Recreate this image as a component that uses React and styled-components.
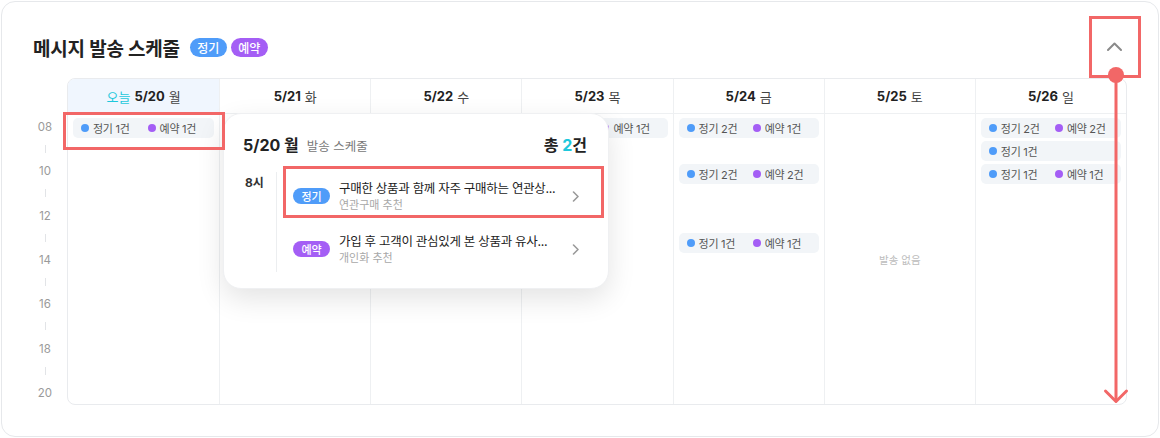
import styled, { createGlobalStyle } from 'styled-components';

const GlobalStyle = createGlobalStyle`
  html, body {
    margin: 0;
    padding: 0;
    background: #fff;
  }
  body {
    font-family: Inter, "Noto Sans CJK KR", sans-serif;
    color: #222;
  }
  * { box-sizing: border-box; }
`;

const BLUE = '#4f9cf9';
const PURPLE = '#a45ef5';
const CYAN = '#1ec8dc';
const RED = '#f26767';

const Page = styled.div`
  position: relative;
  width: 1160px;
  height: 438px;
  padding: 1px;
`;

const Card = styled.section`
  height: 436px;
  border: 1px solid #e6e8eb;
  border-radius: 14px;
  padding: 29px 31px 0 31px;
  display: flex;
  flex-direction: column;
  background: #fff;
`;

const TopBar = styled.header`
  height: 32px;
  margin-bottom: 15px;
  display: flex;
  align-items: center;
  justify-content: space-between;
`;

const TitleGroup = styled.div`
  display: flex;
  align-items: center;
  h2 {
    margin: 0 10px 0 0;
    font-size: 19px;
    font-weight: 700;
    letter-spacing: -0.2px;
    color: #222;
  }
`;

const Pill = styled.span`
  display: inline-flex;
  align-items: center;
  justify-content: center;
  width: 37px;
  height: ${p => (p.$small ? '16px' : '19px')};
  margin-right: ${p => (p.$small ? '0' : '4px')};
  flex-shrink: 0;
  border-radius: 10px;
  background: ${p => (p.$kind === 'reserve' ? PURPLE : BLUE)};
  color: #fff;
  font-size: ${p => (p.$small ? '11px' : '12px')};
  font-weight: 500;
`;

const CollapseButton = styled.button`
  width: 24px;
  height: 24px;
  border: 0;
  padding: 0;
  background: none;
  display: flex;
  align-items: center;
  justify-content: center;
  margin-right: 1px;
`;

const CalendarWrap = styled.div`
  position: relative;
  display: flex;
  height: 327px;
`;

const TimeAxis = styled.div`
  width: 24px;
  margin-right: 10px;
  padding: 42px 0 5px;
  display: flex;
  flex-direction: column;
  align-items: center;
  justify-content: space-between;
`;

const TimeLabel = styled.span`
  font-size: 11.5px;
  line-height: 14px;
  color: #9a9a9a;
`;

const Tick = styled.span`
  width: 1px;
  height: 8px;
  background: #e2e4e7;
`;

const Grid = styled.div`
  flex: 1;
  display: grid;
  grid-template-columns: repeat(7, 1fr);
  border: 1px solid #e9ebee;
  border-radius: 8px;
`;

const DayColumn = styled.div`
  display: flex;
  flex-direction: column;
  min-width: 0;
  & + & { border-left: 1px solid #eef0f2; }
`;

const DayHeader = styled.div`
  height: 35px;
  border-bottom: 1px solid #eef0f2;
  display: flex;
  align-items: center;
  justify-content: center;
  gap: 4px;
  font-size: 13px;
  background: ${p => (p.$today ? '#f0f6fe' : 'transparent')};
  border-top-left-radius: ${p => (p.$today ? '7px' : '0')};
  b { font-weight: 700; color: #222; }
  span { color: #444; }
  em { font-style: normal; color: ${CYAN}; }
`;

const DayBody = styled.div`
  flex: 1;
  padding: 4px 5px;
  display: grid;
  grid-template-rows: repeat(12, 23px);
`;

const EmptyBody = styled.div`
  flex: 1;
  display: flex;
  align-items: center;
  justify-content: center;
  font-size: 10.5px;
  color: #bdbdbd;
`;

const Chip = styled.div`
  grid-row: ${p => p.$row};
  height: 20px;
  border-radius: 5px;
  background: #f2f5f8;
  padding: 0 8px;
  display: grid;
  grid-template-columns: 1fr 1fr;
  column-gap: 8px;
  align-items: center;
`;

const ChipItem = styled.span`
  display: flex;
  align-items: center;
  gap: 4px;
  font-size: 11px;
  color: #555;
  white-space: nowrap;
  letter-spacing: -0.3px;
  &::before {
    content: '';
    width: 8px;
    height: 8px;
    border-radius: 50%;
    background: ${p => (p.$kind === 'reserve' ? PURPLE : BLUE)};
  }
`;

const Popover = styled.div`
  position: absolute;
  left: 190px;
  top: 35px;
  width: 386px;
  height: 176px;
  background: #fff;
  border: 1px solid #eff0f2;
  border-radius: 18px;
  box-shadow: 0 10px 28px rgba(0, 0, 0, 0.11);
  padding: 19px 6px 0 19px;
  z-index: 2;
`;

const PopHead = styled.div`
  height: 22px;
  display: flex;
  align-items: center;
  justify-content: space-between;
  padding-right: 15px;
  h3 {
    margin: 0;
    font-size: 16px;
    font-weight: 700;
    color: #222;
    display: flex;
    align-items: baseline;
    gap: 8px;
  }
  small {
    font-size: 12.5px;
    font-weight: 400;
    color: #777;
  }
  strong {
    font-size: 16px;
    font-weight: 700;
    color: #222;
  }
  strong em { font-style: normal; color: ${CYAN}; }
`;

const HourGroup = styled.div`
  margin-top: 16px;
  display: flex;
`;

const HourLabel = styled.span`
  width: 33px;
  padding: 4px 0 0 2px;
  font-size: 12px;
  line-height: 16px;
  font-weight: 700;
  color: #333;
`;

const Rail = styled.span`
  width: 1px;
  margin: 1px 0 2px;
  background: #eceef0;
`;

const ItemList = styled.div`
  flex: 1;
  padding-left: 9px;
  display: flex;
  flex-direction: column;
  gap: 3px;
`;

const Item = styled.div`
  height: 50px;
  display: flex;
  align-items: center;
  gap: 9px;
  padding: 0 22px 0 7px;
`;

const ItemText = styled.div`
  flex: 1;
  min-width: 0;
  display: flex;
  flex-direction: column;
  gap: 1px;
  p {
    margin: 0;
    font-size: 12.5px;
    line-height: 17px;
    color: #222;
    white-space: nowrap;
    overflow: hidden;
    text-overflow: ellipsis;
    letter-spacing: -0.3px;
  }
  span {
    font-size: 11px;
    line-height: 15px;
    color: #a8a8a8;
  }
`;

const Frame = styled.div`
  position: absolute;
  left: ${p => p.$x}px;
  top: ${p => p.$y}px;
  width: ${p => p.$w}px;
  height: ${p => p.$h}px;
  border: 3px solid ${RED};
  z-index: 5;
  pointer-events: none;
`;

const Pointer = styled.svg`
  position: absolute;
  left: 1100px;
  top: 66px;
  z-index: 5;
  pointer-events: none;
`;

const days = [
  { date: '5/20', day: '월', today: true, events: [{ row: 1, r: 1, v: 1 }] },
  { date: '5/21', day: '화', events: [] },
  { date: '5/22', day: '수', events: [] },
  { date: '5/23', day: '목', events: [{ row: 1, r: 1, v: 1 }] },
  {
    date: '5/24', day: '금',
    events: [{ row: 1, r: 2, v: 1 }, { row: 3, r: 2, v: 2 }, { row: 6, r: 1, v: 1 }],
  },
  { date: '5/25', day: '토', events: null },
  {
    date: '5/26', day: '일',
    events: [{ row: 1, r: 2, v: 2 }, { row: 2, r: 1 }, { row: 3, r: 1, v: 1 }],
  },
];

const hours = ['08', '10', '12', '14', '16', '18', '20'];

const schedule = [
  { kind: 'regular', label: '정기', title: '구매한 상품과 함께 자주 구매하는 연관상...', sub: '연관구매 추천' },
  { kind: 'reserve', label: '예약', title: '가입 후 고객이 관심있게 본 상품과 유사...', sub: '개인화 추천' },
];

function Chevron({ dir }) {
  return dir === 'up' ? (
    <svg width="15" height="10" viewBox="0 0 15 10">
      <polyline points="1,8 7.5,1.5 14,8" fill="none" stroke="#8a8a8a" strokeWidth="2" strokeLinecap="round" strokeLinejoin="round" />
    </svg>
  ) : (
    <svg width="8" height="11" viewBox="0 0 8 11">
      <polyline points="1.5,1 6,5.5 1.5,10" fill="none" stroke="#9a9a9a" strokeWidth="1.6" strokeLinecap="round" strokeLinejoin="round" />
    </svg>
  );
}

export default function App() {
  return (
    <Page>
      <GlobalStyle />
      <Card>
        <TopBar>
          <TitleGroup>
            <h2>메시지 발송 스케줄</h2>
            <Pill $kind="regular">정기</Pill>
            <Pill $kind="reserve">예약</Pill>
          </TitleGroup>
          <CollapseButton>
            <Chevron dir="up" />
          </CollapseButton>
        </TopBar>

        <CalendarWrap>
          <TimeAxis>
            {hours.map((h, i) => [
              i > 0 && <Tick key={'t' + h} />,
              <TimeLabel key={h}>{h}</TimeLabel>,
            ])}
          </TimeAxis>

          <Grid>
            {days.map(d => (
              <DayColumn key={d.date}>
                <DayHeader $today={d.today}>
                  {d.today && <em>오늘</em>}
                  <b>{d.date}</b>
                  <span>{d.day}</span>
                </DayHeader>
                {d.events ? (
                  <DayBody>
                    {d.events.map(e => (
                      <Chip key={e.row} $row={e.row}>
                        {e.r && <ChipItem $kind="regular">정기 {e.r}건</ChipItem>}
                        {e.v && <ChipItem $kind="reserve">예약 {e.v}건</ChipItem>}
                      </Chip>
                    ))}
                  </DayBody>
                ) : (
                  <EmptyBody>발송 없음</EmptyBody>
                )}
              </DayColumn>
            ))}
          </Grid>

          <Popover>
            <PopHead>
              <h3>5/20 월<small>발송 스케줄</small></h3>
              <strong>총 <em>2</em>건</strong>
            </PopHead>
            <HourGroup>
              <HourLabel>8시</HourLabel>
              <Rail />
              <ItemList>
                {schedule.map(s => (
                  <Item key={s.label}>
                    <Pill $small $kind={s.kind}>{s.label}</Pill>
                    <ItemText>
                      <p>{s.title}</p>
                      <span>{s.sub}</span>
                    </ItemText>
                    <Chevron dir="right" />
                  </Item>
                ))}
              </ItemList>
            </HourGroup>
          </Popover>
        </CalendarWrap>
      </Card>

      <Frame $x={63} $y={112} $w={162} $h={38} />
      <Frame $x={283} $y={166} $w={321} $h={52} />
      <Frame $x={1089} $y={16} $w={52} $h={62} />
      <Pointer width="32" height="340" viewBox="0 0 32 340">
        <line x1="16" y1="9" x2="16" y2="335" stroke={RED} strokeWidth="3" />
        <polyline points="5.5,325 16,335.5 26.5,325" fill="none" stroke={RED} strokeWidth="3" strokeLinecap="round" strokeLinejoin="round" />
        <circle cx="16" cy="9" r="8" fill={RED} />
      </Pointer>
    </Page>
  );
}
